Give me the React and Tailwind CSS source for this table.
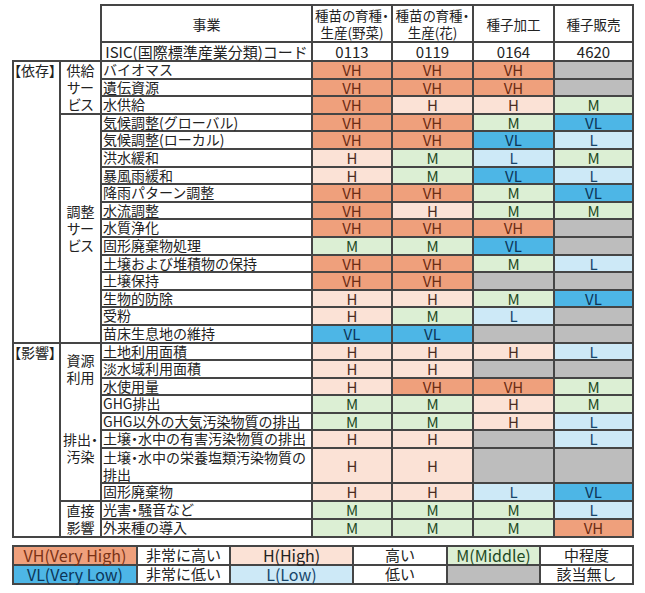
const tone = {
  VH: "bg-[#EFA07C] text-[#6b2c14]",
  H: "bg-[#FBE2D6] text-[#4a2c22]",
  M: "bg-[#DCEFD4] text-[#1e4a24]",
  VL: "bg-[#4DB6E6] text-[#0c3558]",
  L: "bg-[#CDE9F7] text-[#17466b]",
  "": "bg-[#BDBDBD]",
};

const rows = [
  ["バイオマス", ["VH", "VH", "VH", ""]],
  ["遺伝資源", ["VH", "VH", "VH", ""]],
  ["水供給", ["VH", "H", "H", "M"]],
  ["気候調整(グローバル)", ["VH", "VH", "M", "VL"]],
  ["気候調整(ローカル)", ["VH", "VH", "VL", "L"]],
  ["洪水緩和", ["H", "M", "L", "M"]],
  ["暴風雨緩和", ["H", "M", "VL", "L"]],
  ["降雨パターン調整", ["VH", "VH", "M", "VL"]],
  ["水流調整", ["VH", "H", "M", "M"]],
  ["水質浄化", ["VH", "VH", "VH", ""]],
  ["固形廃棄物処理", ["M", "M", "VL", ""]],
  ["土壌および堆積物の保持", ["VH", "VH", "M", "L"]],
  ["土壌保持", ["VH", "VH", "", ""]],
  ["生物的防除", ["H", "H", "M", "VL"]],
  ["受粉", ["H", "M", "L", ""]],
  ["苗床生息地の維持", ["VL", "VL", "", ""]],
  ["土地利用面積", ["H", "H", "H", "L"]],
  ["淡水域利用面積", ["H", "H", "", ""]],
  ["水使用量", ["H", "VH", "VH", "M"]],
  ["GHG排出", ["M", "M", "H", "M"]],
  ["GHG以外の大気汚染物質の排出", ["M", "M", "H", "L"]],
  ["土壌・水中の有害汚染物質の排出", ["H", "H", "", "L"]],
  [["土壌・水中の栄養塩類汚染物質の", "排出"], ["H", "H", "", ""]],
  ["固形廃棄物", ["H", "H", "L", "VL"]],
  ["光害・騒音など", ["M", "M", "M", "L"]],
  ["外来種の導入", ["M", "M", "M", "VH"]],
];

// first column groups (top aligned)
const big = { 0: ["【依存】", 16], 16: ["【影響】", 10] };
// second column groups (centered)
const sub = {
  0: [["供給", "サー", "ビス"], 3, ""],
  3: [["調整", "サー", "ビス"], 13, ""],
  16: [["資源", "利用"], 3, "[border-bottom-style:hidden]"],
  19: [["排出・", "汚染"], 5, "[border-top-style:hidden]"],
  24: [["直接", "影響"], 2, ""],
};

const line = "border-2 border-[#454545]";

// narrow middle dot like the original sheet
function Label({ text }) {
  const parts = text.split("・");
  return parts.map((p, k) => (
    <span key={k}>
      {k > 0 && <span className="[font-feature-settings:'palt']">・</span>}
      {p}
    </span>
  ));
}

export default function App() {
  return (
    <div className="bg-white w-[645px] h-[593px] overflow-hidden pl-[12px] pt-[4px] font-['Noto_Sans_CJK_JP','Noto_Sans',sans-serif] text-[#222]">
      <table className="border-collapse table-fixed w-[620px]">
        <colgroup>
          <col className="w-[47px]" />
          <col className="w-[41px]" />
          <col className="w-[211px]" />
          <col className="w-[80px]" />
          <col className="w-[81px]" />
          <col className="w-[81px]" />
          <col className="w-[79px]" />
        </colgroup>
        <tbody>
          <tr className="h-[37px]">
            <td colSpan={2} rowSpan={2} className="border-0"></td>
            <td className={`${line} text-center text-[14px] leading-[16px]`}>事業</td>
            <td className={`${line} text-center text-[13.5px] leading-[16.5px] whitespace-nowrap [font-feature-settings:'palt']`}>
              種苗の育種・<br />生産(野菜)
            </td>
            <td className={`${line} text-center text-[13.5px] leading-[16.5px] whitespace-nowrap [font-feature-settings:'palt']`}>
              種苗の育種・<br />生産(花)
            </td>
            <td className={`${line} text-center text-[13.5px] leading-[16px]`}>種子加工</td>
            <td className={`${line} text-center text-[13.5px] leading-[16px]`}>種子販売</td>
          </tr>
          <tr className="h-[19px] text-[15px] leading-[16px]">
            <td className={`${line} text-center whitespace-nowrap`}>ISIC(国際標準産業分類)コード</td>
            <td className={`${line} text-center`}>0113</td>
            <td className={`${line} text-center`}>0119</td>
            <td className={`${line} text-center`}>0164</td>
            <td className={`${line} text-center`}>4620</td>
          </tr>
          {rows.map(([name, vals], i) => (
            <tr key={i} className={Array.isArray(name) ? "h-[35.2px]" : "h-[17.6px]"}>
              {big[i] && (
                <td
                  rowSpan={big[i][1]}
                  className={`${line} align-top pt-px text-[14px] leading-[15.6px] whitespace-nowrap [font-feature-settings:'palt']`}
                >
                  {big[i][0]}
                </td>
              )}
              {sub[i] && (
                <td
                  rowSpan={sub[i][1]}
                  className={`${line} ${sub[i][2]} text-center text-[14px] leading-[16.9px] whitespace-nowrap [font-feature-settings:'palt']`}
                >
                  {sub[i][0].map((t) => (
                    <div key={t}>{t}</div>
                  ))}
                </td>
              )}
              {Array.isArray(name) ? (
                <td className={`${line} pl-px text-[14px] leading-[16.5px] whitespace-nowrap`}>
                  <Label text={name[0]} />
                  <br />
                  {name[1]}
                </td>
              ) : (
                <td className={`${line} pl-px text-[14px] leading-[15.6px] whitespace-nowrap`}>
                  <Label text={name} />
                </td>
              )}
              {vals.map((v, j) => (
                <td key={j} className={`${line} ${tone[v]} text-center text-[15px] leading-[15.6px]`}>
                  {v}
                </td>
              ))}
            </tr>
          ))}
        </tbody>
      </table>

      <table className="mt-[7px] border-collapse table-fixed w-[620px] text-center text-[15px] leading-[16px]">
        <colgroup>
          <col className="w-[124px]" />
          <col className="w-[93px]" />
          <col className="w-[123px]" />
          <col className="w-[94px]" />
          <col className="w-[93px]" />
          <col className="w-[93px]" />
        </colgroup>
        <tbody>
          <tr className="h-[19px]">
            <td className={`${line} bg-[#EFA07C] text-[#7a3216] text-[16px]`}>VH(Very High)</td>
            <td className={line}>非常に高い</td>
            <td className={`${line} bg-[#FBE2D6] text-[16px]`}>H(High)</td>
            <td className={line}>高い</td>
            <td className={`${line} bg-[#DCEFD4] text-[#1e4a24] text-[16px]`}>M(Middle)</td>
            <td className={line}>中程度</td>
          </tr>
          <tr className="h-[19px]">
            <td className={`${line} bg-[#4DB6E6] text-[#0c3558] text-[16px]`}>VL(Very Low)</td>
            <td className={line}>非常に低い</td>
            <td className={`${line} bg-[#CDE9F7] text-[#17466b] text-[16px]`}>L(Low)</td>
            <td className={line}>低い</td>
            <td className={`${line} bg-[#BDBDBD]`}></td>
            <td className={line}>該当無し</td>
          </tr>
        </tbody>
      </table>
    </div>
  );
}
